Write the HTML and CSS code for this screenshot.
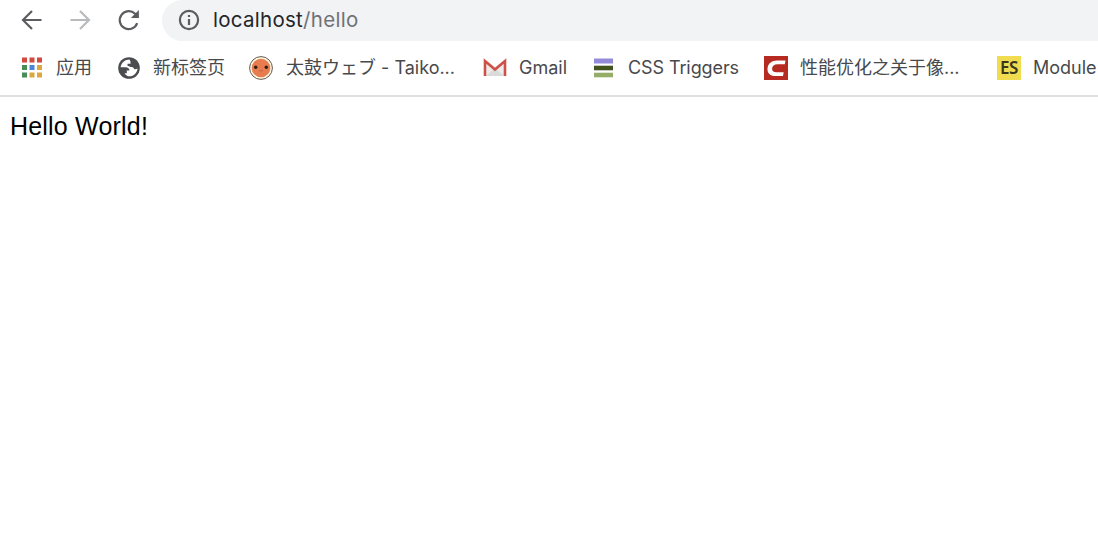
FILE: index.html
```
<!DOCTYPE html>
<html lang="zh-CN">

<head>
    <meta charset="utf-8">
    <meta name="viewport" content="width=device-width, initial-scale=1.0">
    <title>localhost/hello</title>
    <link rel="stylesheet" href="styles.css">
</head>

<body>
    <header>
        <div class="toolbar">
            <svg class="back" width="24" height="24" viewBox="0 0 24 24"><path d="M21.5 12H3.5M12 3L3 12l9 9" /></svg>
            <svg class="forward" width="24" height="24" viewBox="0 0 24 24"><path d="M2.5 12h18M12 3l9 9-9 9" /></svg>
            <svg class="reload" width="24" height="24" viewBox="0 0 24 24">
                <path d="M21.2 15.2A9 9 0 1 1 19.1 5.8L20.8 7.5" />
                <path class="fill" d="M22.9 2v8h-8z" />
            </svg>
            <div class="address">
                <svg class="info" width="22" height="22" viewBox="0 0 22 22">
                    <circle cx="11" cy="11" r="9.1" />
                    <path d="M11 10v6M11 6v2.1" />
                </svg>
                <span class="url">localhost<span class="path">/hello</span></span>
            </div>
        </div>
        <nav class="bookmarks">
            <div class="bookmark apps">
                <svg width="24" height="24" viewBox="0 0 24 24">
                    <path fill="#d04a40" d="M2 1.5h5v5H2zM9.5 1.5h5v5h-5zM17 1.5h5v5h-5z" />
                    <path fill="#478d58" d="M2 9h5v5H2zM2 16.5h5v5H2z" />
                    <path fill="#4a86dc" d="M9.5 9h5v5h-5z" />
                    <path fill="#dba83f" d="M17 9h5v5h-5zM9.5 16.5h5v5h-5zM17 16.5h5v5h-5z" />
                </svg>
                <span>应用</span>
            </div>
            <div class="bookmark newtab">
                <svg width="24" height="24" viewBox="0 0 24 24">
                    <circle cx="12" cy="12" r="10.8" fill="#4b4c4f" />
                    <path fill="#fff" d="M12.500 3.500C8 3.500 4.200 6.800 3.600 11.300H8.500C11 11.300 12.500 12.600 12.500 14.500H9.800V17.200H7.500C8.500 19.200 10.500 20.300 12.500 20.300C16.800 20.300 20.300 16.800 20.500 12.500C19.500 13.200 18.500 13.300 17.300 13.200C16.700 11.500 15.700 11 13.800 11L10.500 9.800V7.700H13.500V5.600Z" />
                </svg>
                <span>新标签页</span>
            </div>
            <div class="bookmark taiko">
                <svg width="24" height="24" viewBox="0 0 24 24">
                    <circle cx="12" cy="12" r="11.4" fill="#fff4dd" stroke="#625b54" stroke-width="1" />
                    <circle cx="12" cy="12" r="9.3" fill="#e77d4e" />
                    <circle cx="6.700" cy="11.200" r="1.700" fill="#301a16" />
                    <circle cx="17.300" cy="11.200" r="1.700" fill="#301a16" />
                    <path d="M10 14.500q1 1 2 0q1 1 2 0" fill="none" stroke="#b85c46" stroke-width=".8" />
                </svg>
                <span>太鼓ウェブ - Taiko...</span>
            </div>
            <div class="bookmark gmail">
                <svg width="24" height="24" viewBox="0 0 24 24">
                    <path fill="#ececec" d="M1 4h22v16H1z" />
                    <path fill="#dadada" d="M3 20l9-8 9 8z" />
                    <path fill="#fff" d="M3 4h18l-9 7z" />
                    <path fill="none" stroke="#ce5148" stroke-width="2.600" d="M2 20V5l10 8.500L22 5v15" />
                </svg>
                <span>Gmail</span>
            </div>
            <div class="bookmark triggers">
                <svg width="24" height="24" viewBox="0 0 24 24">
                    <path fill="#938bd9" d="M2 2.500h19v5H2z" />
                    <path fill="#42531d" d="M2 9.700h19v4.600H2z" />
                    <path fill="#96ad69" d="M2 16.700h19v4.600H2z" />
                </svg>
                <span>CSS Triggers</span>
            </div>
            <div class="bookmark csdn">
                <svg width="24" height="24" viewBox="0 0 24 24">
                    <path fill="#b72a22" d="M0 0h24v24H0z" />
                    <path fill="#fff" d="M21.500 4.500L20.800 8.200H13.500C10.200 8.200 8.300 9.900 8.100 12.500C7.900 15 9.500 16.300 12.200 16.300H19.700L19 20H11.500C6.200 20 3.200 17.200 3.500 12.700C3.800 7.600 7.600 4.500 13.300 4.500Z" />
                </svg>
                <span>性能优化之关于像...</span>
            </div>
            <div class="bookmark module">
                <b class="es">ES</b>
                <span>Module</span>
            </div>
        </nav>
    </header>
    <main>Hello World!</main>
</body>

</html>
```
FILE: styles.css
```
body {
    margin: 0;
    background: #fff;
    overflow: hidden;
    font-family: Inter, "Noto Sans CJK SC", sans-serif;
}

header {
    border-bottom: 2px solid #dedfe0;
}

.toolbar {
    display: flex;
    align-items: center;
    height: 41px;
    padding-left: 20px;
}

.toolbar svg {
    flex: none;
    fill: none;
    stroke: #5b5c5f;
    stroke-width: 2.2;
}

.toolbar .back,
.toolbar .forward {
    margin-right: 24px;
    margin-top: -2px;
}

.toolbar .forward {
    stroke: #b9babc;
}

.toolbar .reload {
    margin-right: 22px;
    margin-top: -1px;
}

.toolbar .reload .fill {
    fill: #5b5c5f;
    stroke: none;
}

.address {
    display: flex;
    flex: 1;
    align-items: center;
    box-sizing: border-box;
    height: 41px;
    padding: 0 0 2px 16px;
    border-radius: 0 0 0 21px;
    border-top-left-radius: 21px;
    background: #f1f3f4;
}

.url {
    margin-left: 13px;
    font-size: 20.5px;
    line-height: 38px;
    letter-spacing: 0.28px;
    color: #242528;
}

.path {
    color: #707276;
}

.bookmarks {
    display: flex;
    align-items: center;
    height: 54px;
    padding-left: 20px;
}

.bookmark {
    display: flex;
    flex: none;
    align-items: center;
    gap: 12px;
    font-size: 18px;
    line-height: 24px;
    color: #48494c;
    white-space: nowrap;
}

.apps {
    width: 97px;
}

.newtab {
    width: 132px;
}

.taiko {
    width: 234px;
    gap: 13px;
    font-family: Inter, "Noto Sans CJK JP", sans-serif;
}

.gmail {
    width: 109px;
}

.triggers {
    width: 172px;
    letter-spacing: -0.1px;
}

.csdn {
    width: 233px;
}

.es {
    width: 24px;
    height: 24px;
    background: #f0dc4e;
    font: 600 17px/24px "Noto Sans", sans-serif;
    letter-spacing: -0.5px;
    color: #39371c;
    text-align: center;
}

main {
    padding: 12px 10px;
    font-family: "Liberation Sans", Arial, sans-serif;
    font-size: 25px;
    line-height: 34px;
    letter-spacing: 0.2px;
    color: #000;
}
```
